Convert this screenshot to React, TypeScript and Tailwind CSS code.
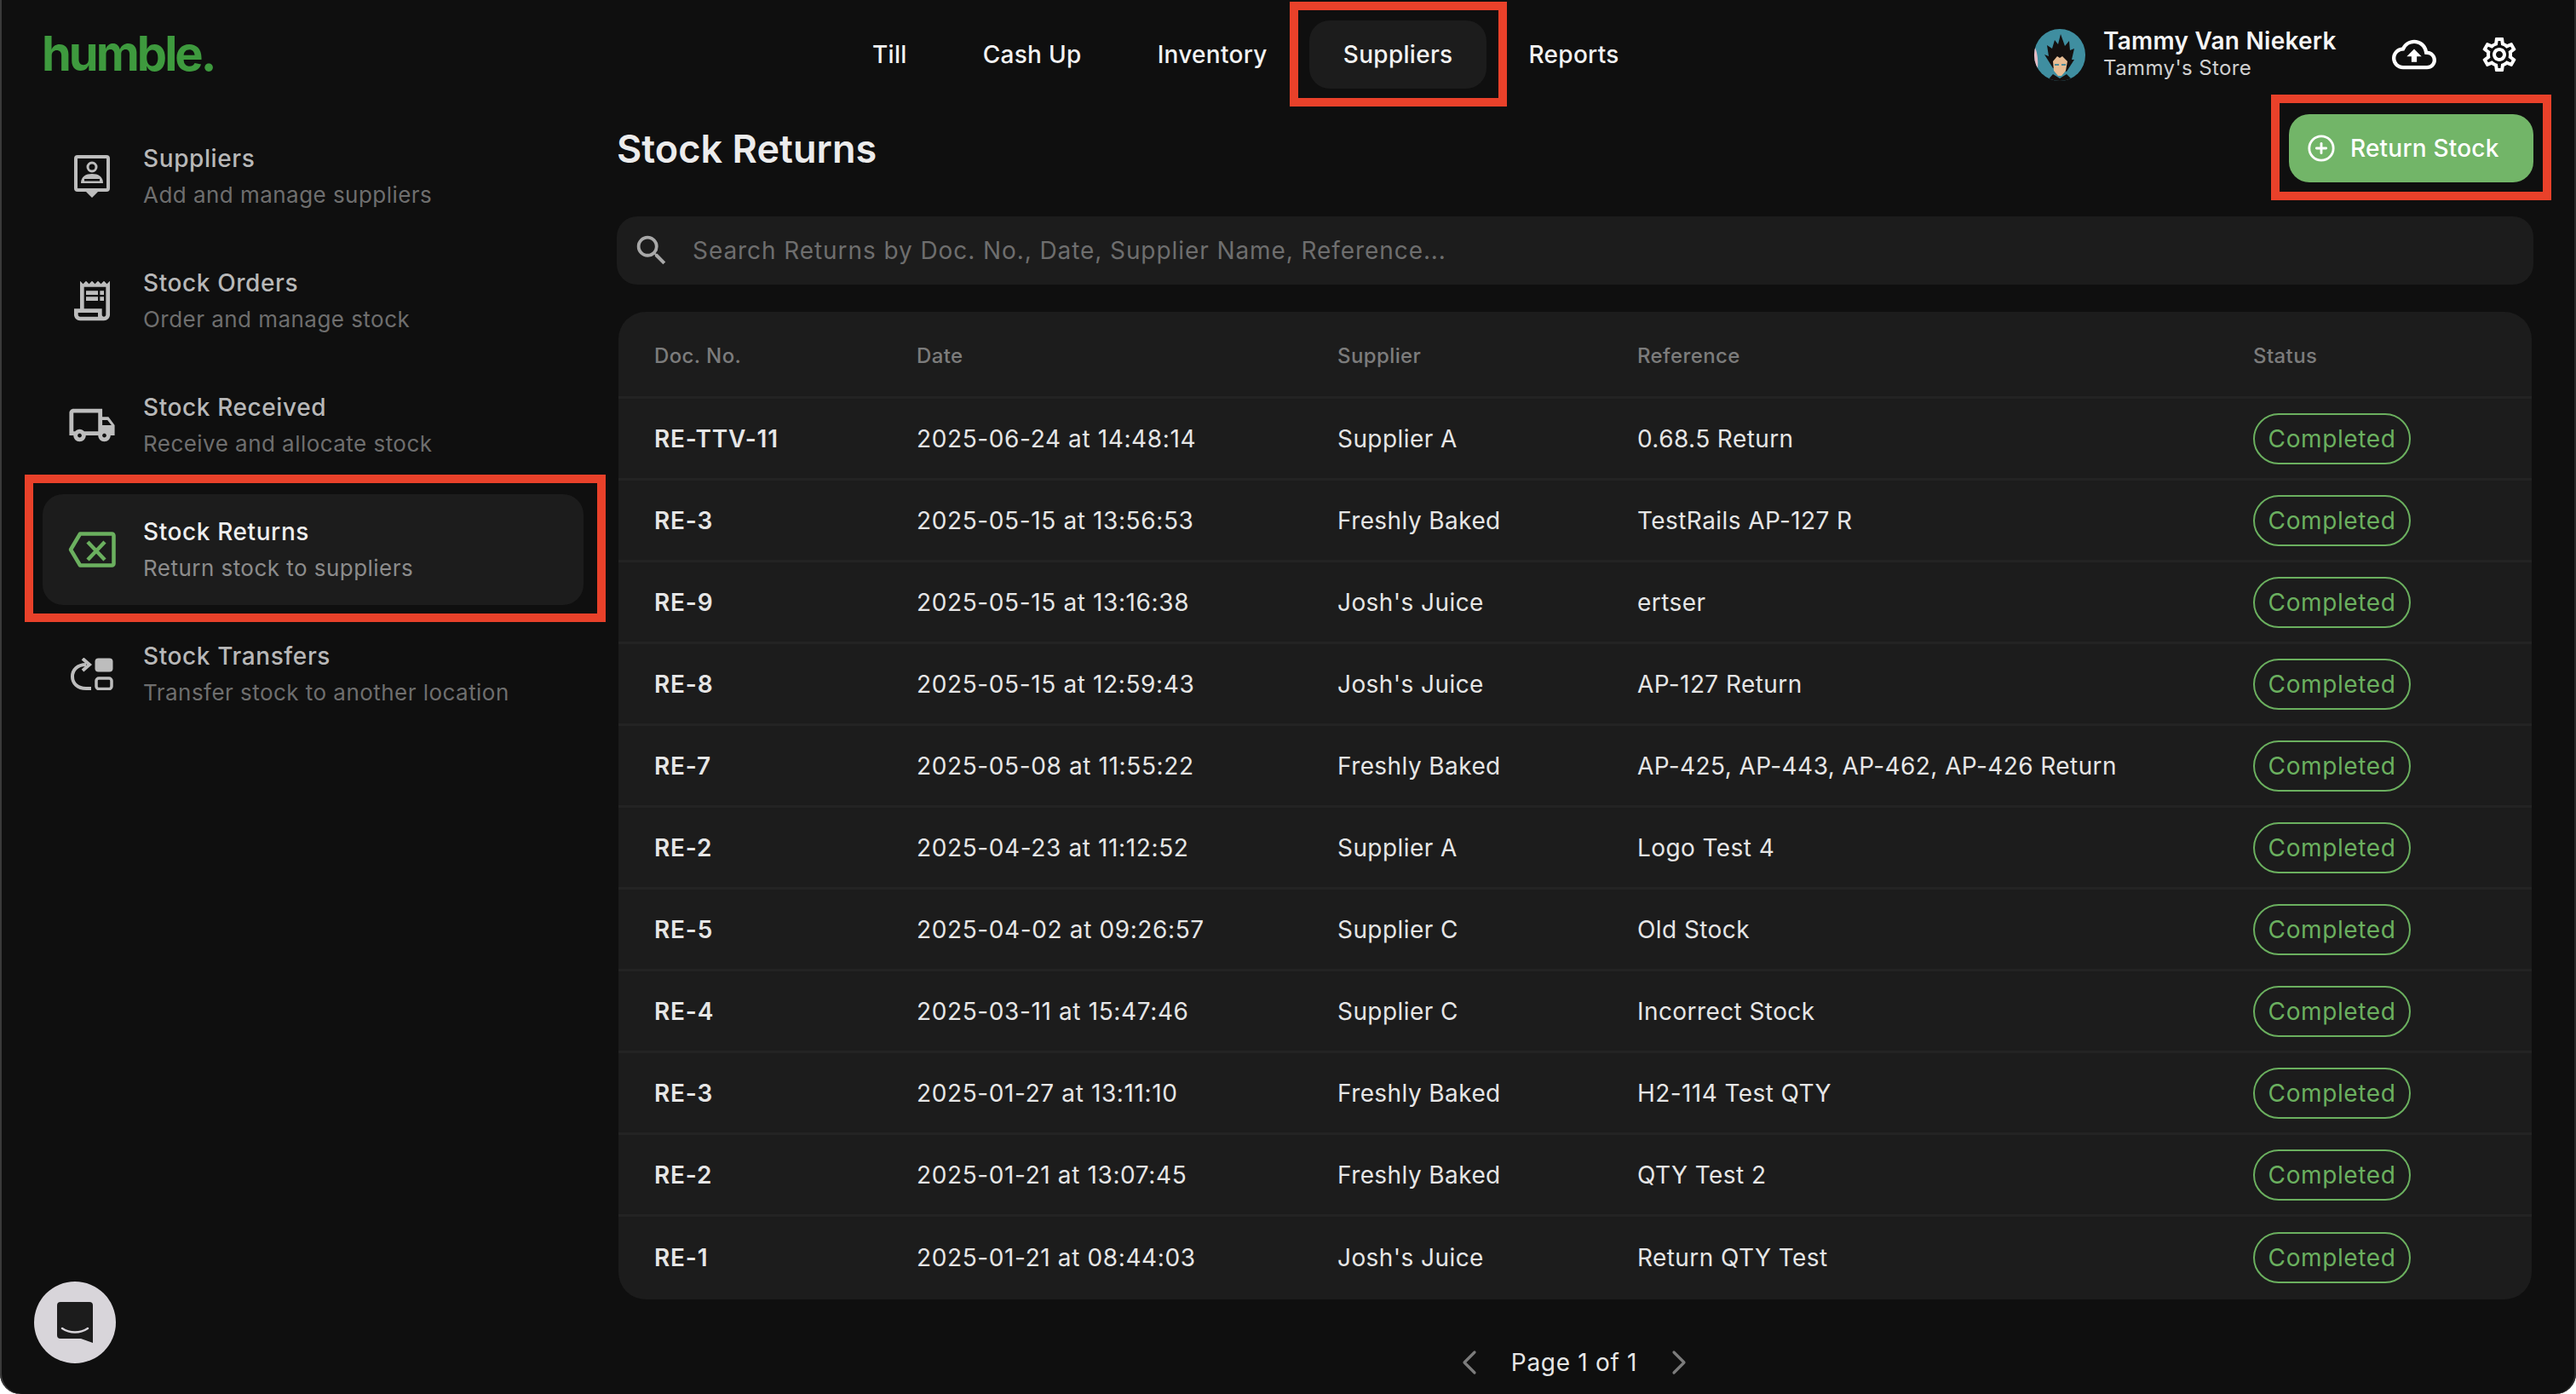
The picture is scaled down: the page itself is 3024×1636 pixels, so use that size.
import { ChevronLeft, ChevronRight, CirclePlus } from 'lucide-react';
import {
  MdOutlineCloudUpload,
  MdOutlineLocalShipping,
  MdOutlineReceiptLong,
  MdOutlineSearch,
  MdOutlineSettings,
} from 'react-icons/md';

const rows = [
  ['RE-TTV-11', '2025-06-24 at 14:48:14', 'Supplier A', '0.68.5 Return'],
  ['RE-3', '2025-05-15 at 13:56:53', 'Freshly Baked', 'TestRails AP-127 R'],
  ['RE-9', '2025-05-15 at 13:16:38', "Josh's Juice", 'ertser'],
  ['RE-8', '2025-05-15 at 12:59:43', "Josh's Juice", 'AP-127 Return'],
  ['RE-7', '2025-05-08 at 11:55:22', 'Freshly Baked', 'AP-425, AP-443, AP-462, AP-426 Return'],
  ['RE-2', '2025-04-23 at 11:12:52', 'Supplier A', 'Logo Test 4'],
  ['RE-5', '2025-04-02 at 09:26:57', 'Supplier C', 'Old Stock'],
  ['RE-4', '2025-03-11 at 15:47:46', 'Supplier C', 'Incorrect Stock'],
  ['RE-3', '2025-01-27 at 13:11:10', 'Freshly Baked', 'H2-114 Test QTY'],
  ['RE-2', '2025-01-21 at 13:07:45', 'Freshly Baked', 'QTY Test 2'],
  ['RE-1', '2025-01-21 at 08:44:03', "Josh's Juice", 'Return QTY Test'],
];

const SupplierIcon = () => (
  <svg width="42" height="50" viewBox="0 0 42 50" fill="none">
    <path d="M4 0h34a4 4 0 0 1 4 4v35a4 4 0 0 1-4 4h-10l-7 7-7-7H4a4 4 0 0 1-4-4V4a4 4 0 0 1 4-4z" fill="currentColor" />
    <rect x="4" y="4" width="34" height="35" fill="#0f0f0f" />
    <circle cx="21" cy="14" r="5" stroke="currentColor" strokeWidth="3" />
    <path d="M8 33c0-8 6-11 13-11s13 3 13 11z" fill="currentColor" />
    <rect x="12" y="28" width="18" height="2.5" fill="#0f0f0f" />
  </svg>
);

const ReturnIcon = () => (
  <svg width="56" height="42" viewBox="0 0 56 42" fill="none" stroke="#6bb05f" strokeLinejoin="round">
    <path d="M14 2.5h37.5a2 2 0 0 1 2 2v33a2 2 0 0 1-2 2H14L3 21z" strokeWidth="4.5" />
    <path d="M23 12l20 21M43 12L23 33" strokeWidth="4.5" />
  </svg>
);

const TransferIcon = () => (
  <svg width="50" height="38" viewBox="0 0 50 38" fill="none">
    <rect x="28.5" y="0.5" width="21" height="16" rx="4" fill="currentColor" />
    <rect x="30" y="24" width="18" height="12.5" rx="3" stroke="currentColor" strokeWidth="3.5" />
    <path d="M24 36h-6C8 36 2 30 2 22S8 8 18 8" stroke="currentColor" strokeWidth="4" />
    <path d="M14 1l8 7-8 7" stroke="currentColor" strokeWidth="4" />
  </svg>
);

const Avatar = () => (
  <div className="w-[60px] h-[61px] rounded-full bg-[#3f8ea0] overflow-hidden">
    <svg width="60" height="61" viewBox="0 0 60 61">
      <path d="M0 20c3 5 5 14 4 28l-4-2z" fill="#e6bcc4" />
      <path d="M22 46L12 30l5 2-2-13 6 4 3-10 4 5 3-12 5 14 5-6 1 11 5-2-3 13 3 0-9 14z" fill="#14100f" />
      <path d="M22 38l5-6 3 2 3-2 6 6-2 11-5 6h-4l-5-6z" fill="#e8bd94" />
      <path d="M24 41h5v2h-5zM32 41h5v2h-5z" fill="#4d8c9a" />
      <path d="M15 61l7-8 8 5 8-5 8 8z" fill="#14100f" />
    </svg>
  </div>
);

const RedBox = ({ className }: { className: string }) => (
  <span className={`absolute border-[10px] border-[#e9412a] pointer-events-none ${className}`} />
);

const SideItem = ({ icon, title, sub, active }: { icon: React.ReactNode; title: string; sub: string; active?: boolean }) => (
  <div className={`relative h-[130px] w-[635px] rounded-[24px] flex items-center ${active ? 'bg-[#1c1c1c]' : ''}`}>
    <div className={`w-[118px] flex justify-center pr-[2px] ${active ? 'text-[#6bb05f]' : 'text-[#bdbdbd]'}`}>{icon}</div>
    <div>
      <div className={`text-[28px] leading-[36px] font-medium tracking-[0.6px] ${active ? 'text-[#efefef]' : 'text-[#b8b8b8]'}`}>{title}</div>
      <div className={`text-[26px] leading-[36px] mt-[7px] tracking-[0.46px] ${active ? 'text-[#8c8c8c]' : 'text-[#6e6e6e]'}`}>{sub}</div>
    </div>
    {active && <RedBox className="-left-[21px] -right-[26px] -top-[23px] -bottom-[20px]" />}
  </div>
);

const NavItem = ({ label, active }: { label: string; active?: boolean }) => (
  <div className={`relative h-[80px] px-[40px] rounded-[24px] flex items-center text-[28px] font-medium tracking-[0.3px] text-[#f2f2f2] ${active ? 'bg-[#1c1c1c]' : ''}`}>
    {label}
    {active && <RedBox className="-left-[23px] -right-[24px] -top-[22px] -bottom-[21px]" />}
  </div>
);

export default function App() {
  return (
    <div className="relative w-[3024px] h-[1636px] bg-[#0f0f0f] rounded-b-[24px] shadow-[inset_2px_0_0_#3a3a3a,inset_-2px_0_0_#2a2a2a] overflow-hidden font-['Inter',sans-serif]">
      <header className="h-[128px] flex items-start pt-[24px]">
        <div className="w-[984px] pl-[49px] pt-[9px] text-[56px] leading-[60px] font-bold tracking-[-3px] text-[#3e9a3e]">humble.</div>
        <nav className="flex gap-[9px]">
          <NavItem label="Till" />
          <NavItem label="Cash Up" />
          <NavItem label="Inventory" />
          <NavItem label="Suppliers" active />
          <NavItem label="Reports" />
        </nav>
        <div className="ml-auto flex items-center h-[80px] pr-[66px]">
          <Avatar />
          <div className="ml-[21px] w-[339px]">
            <div className="text-[28px] leading-[32px] font-semibold tracking-[0.25px] text-[#f5f5f5]">Tammy Van Niekerk</div>
            <div className="mt-[2px] mb-[2px] text-[24px] leading-[28px] tracking-[0.4px] text-[#d0d0d0]">Tammy's Store</div>
          </div>
          <MdOutlineCloudUpload className="text-white" size={52} />
          <MdOutlineSettings className="text-white ml-[50px]" size={48} />
        </div>
      </header>

      <div className="flex">
        <aside className="w-[724px] pl-[50px] pt-[14px] flex flex-col gap-[16px]">
          <SideItem icon={<SupplierIcon />} title="Suppliers" sub="Add and manage suppliers" />
          <SideItem icon={<MdOutlineReceiptLong size={56} />} title="Stock Orders" sub="Order and manage stock" />
          <SideItem icon={<MdOutlineLocalShipping size={58} />} title="Stock Received" sub="Receive and allocate stock" />
          <SideItem icon={<ReturnIcon />} title="Stock Returns" sub="Return stock to suppliers" active />
          <SideItem icon={<TransferIcon />} title="Stock Transfers" sub="Transfer stock to another location" />
        </aside>

        <main className="w-[2250px] pt-[6px]">
          <div className="h-[80px] flex items-center justify-between">
            <h1 className="pt-[2px] text-[45px] font-semibold tracking-[0.05px] text-[#ececec]">Stock Returns</h1>
            <button className="relative w-[287px] h-[80px] rounded-[24px] bg-[#72b568] flex items-center pl-[21px] text-[28px] font-medium tracking-[0.2px] text-white">
              <CirclePlus size={34} strokeWidth={2} />
              <span className="ml-[17px]">Return Stock</span>
              <RedBox className="-left-[21px] -right-[21px] -top-[23px] -bottom-[21px]" />
            </button>
          </div>

          <div className="mt-[40px] h-[80px] rounded-[24px] bg-[#1c1c1c] flex items-center pl-[18px]">
            <MdOutlineSearch size={46} className="text-[#a8a8a8]" />
            <span className="ml-[25px] text-[28px] tracking-[0.92px] text-[#6e6e6e]">Search Returns by Doc. No., Date, Supplier Name, Reference...</span>
          </div>

          <div className="mt-[32px] mx-[2px] h-[1159px] rounded-[32px] bg-[#1c1c1c] overflow-hidden">
            <div className="h-[102px] pt-[4px] pl-[42px] grid grid-cols-[308px_494px_352px_723px_1fr] items-center border-b-[3px] border-[#232323] text-[24px] font-medium tracking-[0.4px] text-[#7c7c7c]">
              <div>Doc. No.</div>
              <div>Date</div>
              <div>Supplier</div>
              <div>Reference</div>
              <div>Status</div>
            </div>
            {rows.map((r, i) => (
              <div
                key={i}
                className="h-[96px] pl-[42px] grid grid-cols-[308px_494px_352px_723px_1fr] items-center border-b-[3px] border-[#232323] last:border-b-0 text-[28px] tracking-[0.42px] text-[#e6e6e6]"
              >
                <div className="font-semibold tracking-[0.8px]">{r[0]}</div>
                <div className="tracking-[0.62px]">{r[1]}</div>
                <div>{r[2]}</div>
                <div>{r[3]}</div>
                <div>
                  <span className="inline-flex items-center justify-center w-[185px] h-[60px] rounded-full border-2 border-[#6bb05f] tracking-[0.6px] text-[#6bb05f]">Completed</span>
                </div>
              </div>
            ))}
          </div>

          <div className="mt-[50px] flex items-center justify-center text-[28px] tracking-[0.7px] text-[#e6e6e6]">
            <ChevronLeft size={48} strokeWidth={1.6} className="text-[#7c7c7c] -ml-[2px]" />
            <span className="mx-[25px]">Page 1 of 1</span>
            <ChevronRight size={48} strokeWidth={1.6} className="text-[#7c7c7c]" />
          </div>
        </main>
      </div>

      <button className="absolute left-[40px] top-[1504px] w-[96px] h-[96px] rounded-full bg-[#d8d5da] flex items-center justify-center">
        <svg width="42" height="48" viewBox="0 0 42 48">
          <path d="M4 0h34a4 4 0 0 1 4 4v44l-14-5H4a4 4 0 0 1-4-4V4a4 4 0 0 1 4-4z" fill="#1c1c1c" />
          <path d="M6 31c9 6 21 6 30 0" fill="none" stroke="#d8d5da" strokeWidth="2.5" strokeLinecap="round" />
        </svg>
      </button>
    </div>
  );
}
